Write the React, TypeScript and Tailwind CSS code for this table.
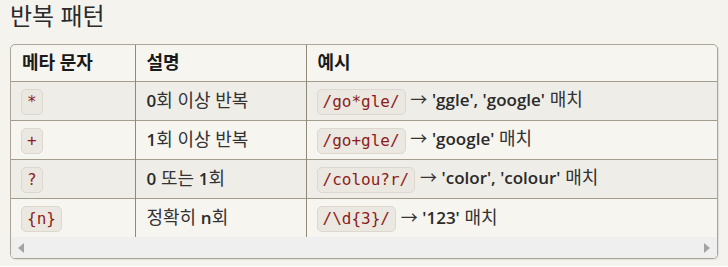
import React from "react";

const sans = '"Open Sans", "Noto Sans CJK KR", sans-serif';
const mono = '"DejaVu Sans Mono", "Liberation Mono", monospace';

function Code({ children }: { children: React.ReactNode }) {
  return (
    <code
      className="inline-block rounded-[5px] border border-[#dcd8cf] bg-[#ebe8e1] px-[5px] align-middle text-[16px] leading-[24px] text-[#8b1c1c]"
      style={{ fontFamily: mono }}
    >
      {children}
    </code>
  );
}

function L({ children }: { children: React.ReactNode }) {
  return <span className="text-[17px] font-semibold text-[#2a2a2a]">{children}</span>;
}

const rows: { code: string; desc: React.ReactNode; ex: string; res: React.ReactNode }[] = [
  {
    code: "*",
    desc: (
      <>
        <L>0</L>회 이상 반복
      </>
    ),
    ex: "/go*gle/",
    res: (
      <>
        <L>'ggle', 'google'</L> 매치
      </>
    ),
  },
  {
    code: "+",
    desc: (
      <>
        <L>1</L>회 이상 반복
      </>
    ),
    ex: "/go+gle/",
    res: (
      <>
        <L>'google'</L> 매치
      </>
    ),
  },
  {
    code: "?",
    desc: (
      <>
        <L>0</L> 또는 <L>1</L>회
      </>
    ),
    ex: "/colou?r/",
    res: (
      <>
        <L>'color', 'colour'</L> 매치
      </>
    ),
  },
  {
    code: "{n}",
    desc: (
      <>
        정확히 <L>n</L>회
      </>
    ),
    ex: "/\\d{3}/",
    res: (
      <>
        <L>'123'</L> 매치
      </>
    ),
  },
];

export default function App() {
  return (
    <div className="min-h-screen w-[728px] bg-[#f4f3ee] px-[10px] pt-[0px]" style={{ fontFamily: sans }}>
      <h2 className="-mt-[1px] text-[24px] leading-[34px] font-normal text-[#2b2b2b]">반복 패턴</h2>
      <div className="mt-[11px] w-[708px] overflow-hidden rounded-[5px] border border-[#aaa598] bg-[#f6f5f0] shadow-[1px_1px_1px_rgba(0,0,0,0.08)]">
        <table className="w-full border-collapse text-left">
          <colgroup>
            <col className="w-[124px]" />
            <col className="w-[171px]" />
            <col />
          </colgroup>
          <thead>
            <tr className="h-[36px] border-b border-[#a29d8e]">
              <th className="border-r border-[#8f8a79] px-[11px] text-[18px] font-bold text-[#1a1a1a]">메타 문자</th>
              <th className="border-r border-[#8f8a79] px-[11px] text-[18px] font-bold text-[#1a1a1a]">설명</th>
              <th className="px-[11px] text-[18px] font-bold text-[#1a1a1a]">예시</th>
            </tr>
          </thead>
          <tbody>
            {rows.map((r, i) => (
              <tr
                key={i}
                className={
                  "h-[39px] text-[18px] leading-[26px] text-[#333] " +
                  (i < rows.length - 1 ? "border-b border-[#a29d8e] " : "") +
                  (i % 2 === 0 ? "bg-[#efede7]" : "bg-[#f6f5f0]")
                }
              >
                <td className="border-r border-[#8f8a79] px-[10px] align-middle">
                  <Code>{r.code}</Code>
                </td>
                <td className="border-r border-[#8f8a79] px-[11px] align-middle">{r.desc}</td>
                <td className="px-[10px] align-middle whitespace-nowrap">
                  <Code>{r.ex}</Code> <span className="text-[17px] text-[#333]">→</span> {r.res}
                </td>
              </tr>
            ))}
          </tbody>
        </table>
        <div className="flex h-[21px] items-center justify-between bg-[#efefef] px-[7px]">
          <svg width="6" height="10" viewBox="0 0 6 10">
            <path d="M6 0 L0 5 L6 10 Z" fill="#a3a3a3" />
          </svg>
          <svg width="6" height="10" viewBox="0 0 6 10">
            <path d="M0 0 L6 5 L0 10 Z" fill="#a3a3a3" />
          </svg>
        </div>
      </div>
    </div>
  );
}
